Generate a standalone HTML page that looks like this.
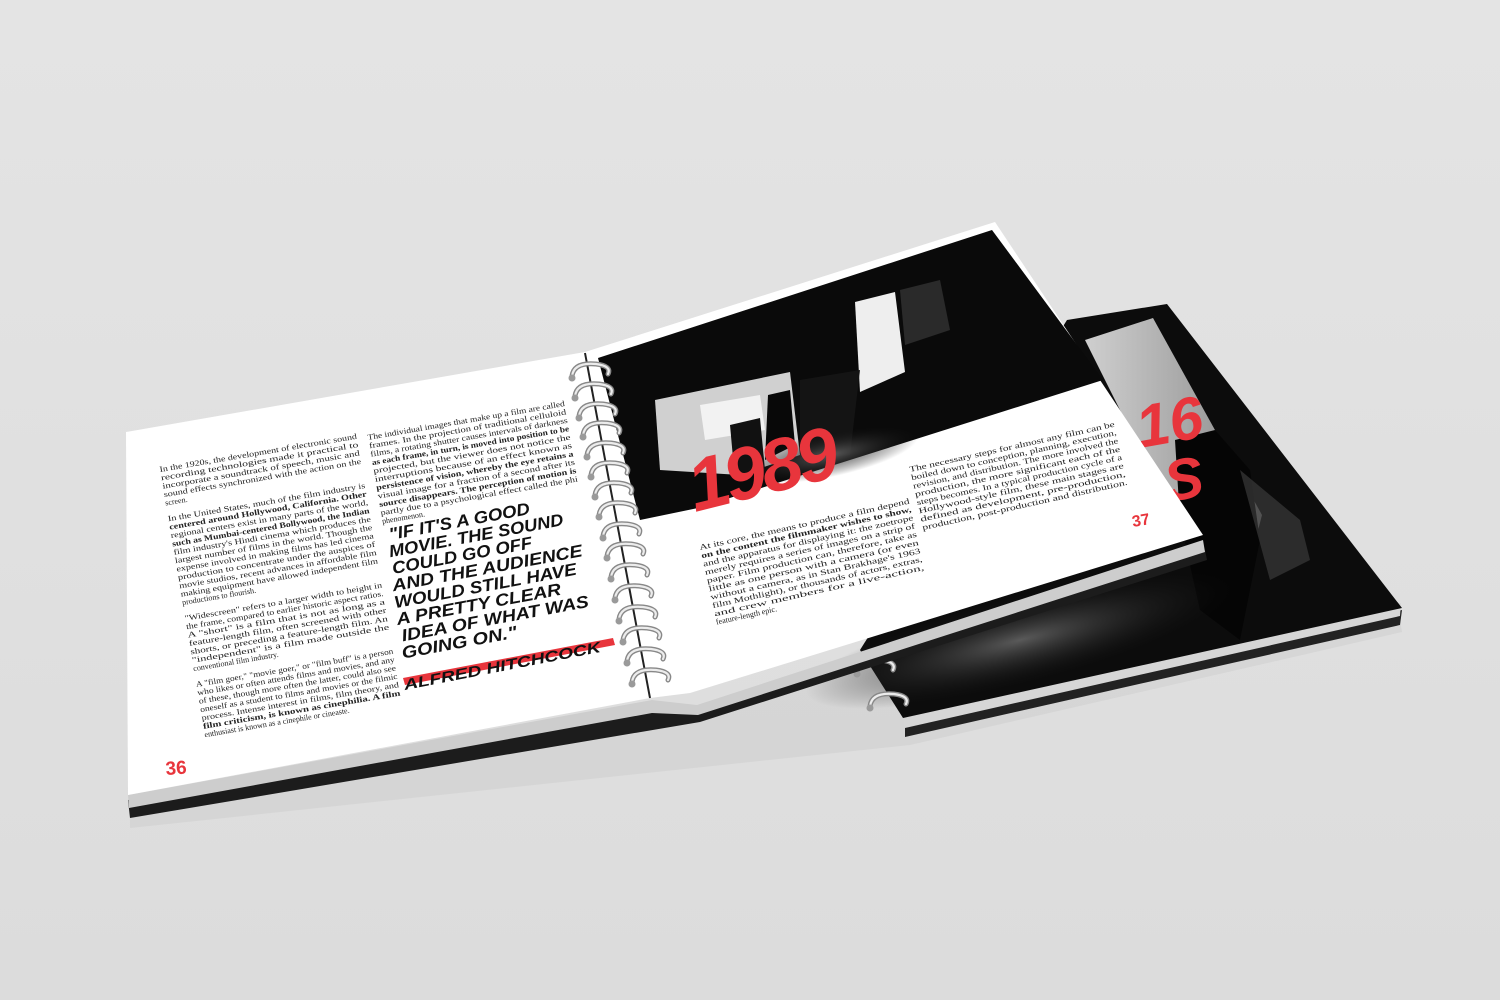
<!DOCTYPE html>
<html><head><meta charset="utf-8"><style>
html,body{margin:0;padding:0;background:#e1e1e1;}
svg{display:block}
.s{font-family:"Liberation Serif",serif;font-size:8px;fill:#222}
.q{font-family:"Liberation Sans Narrow","Liberation Sans",sans-serif;font-style:italic;font-weight:bold;font-size:17px;fill:#111}
</style></head><body>
<svg width="1500" height="1000" viewBox="0 0 1500 1000" xmlns="http://www.w3.org/2000/svg">
<defs>
<linearGradient id="bg" x1="0" y1="0" x2="0" y2="1"><stop offset="0" stop-color="#e4e4e4"/><stop offset="1" stop-color="#dcdcdc"/></linearGradient>
<radialGradient id="gl" cx="0.5" cy="0.5" r="0.5"><stop offset="0" stop-color="#5a5a5a"/><stop offset="1" stop-color="#111" stop-opacity="0"/></radialGradient>
<linearGradient id="ph" x1="0" y1="0" x2="1" y2="0"><stop offset="0" stop-color="#cfcfcf"/><stop offset="1" stop-color="#8a8a8a"/></linearGradient>
<g id="ring">
<path d="M-18,4 q2,-14 24,-12 q16,2 12,10" fill="none" stroke="#888" stroke-width="5" stroke-linecap="round"/>
<path d="M-18,4 q2,-14 24,-12 q16,2 12,10" fill="none" stroke="#ececec" stroke-width="2.2" stroke-linecap="round"/>
<circle cx="-18" cy="6" r="3.5" fill="#9a9a9a"/>
</g>
</defs>
<rect width="1500" height="1000" fill="url(#bg)"/>
<polygon points="130,812 700,722 1210,560 1400,620 1402,632 910,745 130,828" fill="#d2d2d2" opacity="0.7"/>

<!-- back book -->
<polygon points="905,737 1400,625 1402,610 905,724" fill="#222"/>
<polygon points="905,728 1400,616 1401,603 903,716" fill="#d6d6d6"/>
<polygon points="1067,320 1167,304 1402,608 903,718 860,650" fill="#0c0c0c"/>
<polygon points="1085,340 1153,318 1262,515 1240,600 1200,570" fill="url(#ph)"/>
<polygon points="1175,440 1215,430 1250,470 1260,540 1240,640 1200,610 1180,520" fill="#050505"/>
<polygon points="1240,470 1300,520 1310,560 1270,580" fill="#3a3a3a" opacity="0.7"/>
<ellipse cx="1020" cy="640" rx="220" ry="45" fill="url(#gl)" transform="rotate(-14 1020 640)"/>
<text x="1140" y="448" transform="rotate(-10 1140 448)" font-family="Liberation Sans,sans-serif" font-style="italic" font-weight="bold" font-size="60" fill="#e8353c">16</text>
<text x="1168" y="502" transform="rotate(-10 1168 502)" font-family="Liberation Sans,sans-serif" font-style="italic" font-weight="bold" font-size="58" fill="#e8353c">S</text>
<use href="#ring" transform="translate(875,668)"/>
<use href="#ring" transform="translate(888,702)"/>

<!-- front book covers/edges -->
<polygon points="128,800 652,705 700,712 1205,550 1207,560 700,722 130,818" fill="#1c1c1c"/>
<polygon points="128,795 652,700 697,705 1203,540 1205,552 698,715 652,713 129,808" fill="#cdcdcd"/>

<!-- left page -->
<polygon points="126,432 585,352 650,698 128,795" fill="#fff"/>
<!-- right page -->
<polygon points="585,352 995,222 1203,535 690,693 650,698" fill="#fff"/>
<line x1="585" y1="353" x2="650" y2="698" stroke="#222" stroke-width="2"/>
<!-- photo -->
<polygon points="598,358 992,230 1103,380 698,508 640,520" fill="#0a0a0a"/>
<polygon points="655,400 790,372 800,455 740,475 660,470" fill="#d0d0d0"/>
<polygon points="700,405 760,395 765,430 705,440" fill="#f2f2f2"/>
<polygon points="855,302 895,292 905,372 860,392" fill="#eeeeee"/>
<polygon points="800,380 860,370 850,455 800,460" fill="#141414"/>
<polygon points="768,395 790,390 795,445 765,460" fill="#080808"/>
<polygon points="730,425 760,418 765,470 735,480" fill="#111"/>
<polygon points="900,290 940,280 950,330 905,345" fill="#2a2a2a"/>
<ellipse cx="830" cy="455" rx="90" ry="22" fill="url(#gl)" transform="rotate(-12 830 455)"/>
<text x="695" y="512" transform="rotate(-14 695 512)" font-family="Liberation Sans,sans-serif" font-style="italic" font-weight="bold" font-size="74" fill="#e8353c" letter-spacing="-4">1989</text>

<!-- left text col1 -->
<g transform="translate(160,472) rotate(-9.6)" class="s">
<text x="0" y="0" textLength="200" lengthAdjust="spacingAndGlyphs">In the 1920s, the development of electronic sound</text>
<text x="0" y="8.5" textLength="200" lengthAdjust="spacingAndGlyphs">recording technologies made it practical to</text>
<text x="0" y="17" textLength="200" lengthAdjust="spacingAndGlyphs">incorporate a soundtrack of speech, music and</text>
<text x="0" y="25.5" textLength="200" lengthAdjust="spacingAndGlyphs">sound effects synchronized with the action on the</text>
<text x="0" y="34">screen.</text>
<text x="0" y="50" textLength="200" lengthAdjust="spacingAndGlyphs">In the United States, much of the film industry is</text>
<text x="0" y="58.5" textLength="200" lengthAdjust="spacingAndGlyphs" font-weight="bold">centered around Hollywood, California. Other</text>
<text x="0" y="67" textLength="200" lengthAdjust="spacingAndGlyphs">regional centers exist in many parts of the world,</text>
<text x="0" y="75.5" textLength="200" lengthAdjust="spacingAndGlyphs" font-weight="bold">such as Mumbai-centered Bollywood, the Indian</text>
<text x="0" y="84" textLength="200" lengthAdjust="spacingAndGlyphs">film industry's Hindi cinema which produces the</text>
<text x="0" y="92.5" textLength="200" lengthAdjust="spacingAndGlyphs">largest number of films in the world. Though the</text>
<text x="0" y="101" textLength="200" lengthAdjust="spacingAndGlyphs">expense involved in making films has led cinema</text>
<text x="0" y="109.5" textLength="200" lengthAdjust="spacingAndGlyphs">production to concentrate under the auspices of</text>
<text x="0" y="118" textLength="200" lengthAdjust="spacingAndGlyphs">movie studios, recent advances in affordable film</text>
<text x="0" y="126.5" textLength="200" lengthAdjust="spacingAndGlyphs">making equipment have allowed independent film</text>
<text x="0" y="135">productions to flourish.</text>
<text x="0" y="151" textLength="200" lengthAdjust="spacingAndGlyphs">"Widescreen" refers to a larger width to height in</text>
<text x="0" y="159.5" textLength="200" lengthAdjust="spacingAndGlyphs">the frame, compared to earlier historic aspect ratios.</text>
<text x="0" y="168" textLength="200" lengthAdjust="spacingAndGlyphs">A "short" is a film that is not as long as a</text>
<text x="0" y="176.5" textLength="200" lengthAdjust="spacingAndGlyphs">feature-length film, often screened with other</text>
<text x="0" y="185" textLength="200" lengthAdjust="spacingAndGlyphs">shorts, or preceding a feature-length film. An</text>
<text x="0" y="193.5" textLength="200" lengthAdjust="spacingAndGlyphs">"independent" is a film made outside the</text>
<text x="0" y="202">conventional film industry.</text>
<text x="0" y="218" textLength="200" lengthAdjust="spacingAndGlyphs">A "film goer," "movie goer," or "film buff" is a person</text>
<text x="0" y="226.5" textLength="200" lengthAdjust="spacingAndGlyphs">who likes or often attends films and movies, and any</text>
<text x="0" y="235" textLength="200" lengthAdjust="spacingAndGlyphs">of these, though more often the latter, could also see</text>
<text x="0" y="243.5" textLength="200" lengthAdjust="spacingAndGlyphs">oneself as a student to films and movies or the filmic</text>
<text x="0" y="252" textLength="200" lengthAdjust="spacingAndGlyphs">process. Intense interest in films, film theory, and</text>
<text x="0" y="260.5" textLength="200" lengthAdjust="spacingAndGlyphs" font-weight="bold">film criticism, is known as cinephilia. A film</text>
<text x="0" y="269">enthusiast is known as a cinephile or cineaste.</text>
</g>
<g transform="translate(368,440) rotate(-9.8)" class="s">
<text x="0" y="0" textLength="200" lengthAdjust="spacingAndGlyphs">The individual images that make up a film are called</text>
<text x="0" y="8.5" textLength="200" lengthAdjust="spacingAndGlyphs">frames. In the projection of traditional celluloid</text>
<text x="0" y="17" textLength="200" lengthAdjust="spacingAndGlyphs">films, a rotating shutter causes intervals of darkness</text>
<text x="0" y="25.5" textLength="200" lengthAdjust="spacingAndGlyphs" font-weight="bold">as each frame, in turn, is moved into position to be</text>
<text x="0" y="34" textLength="200" lengthAdjust="spacingAndGlyphs">projected, but the viewer does not notice the</text>
<text x="0" y="42.5" textLength="200" lengthAdjust="spacingAndGlyphs">interruptions because of an effect known as</text>
<text x="0" y="51" textLength="200" lengthAdjust="spacingAndGlyphs" font-weight="bold">persistence of vision, whereby the eye retains a</text>
<text x="0" y="59.5" textLength="200" lengthAdjust="spacingAndGlyphs">visual image for a fraction of a second after its</text>
<text x="0" y="68" textLength="200" lengthAdjust="spacingAndGlyphs" font-weight="bold">source disappears. The perception of motion is</text>
<text x="0" y="76.5" textLength="200" lengthAdjust="spacingAndGlyphs">partly due to a psychological effect called the phi</text>
<text x="0" y="85">phenomenon.</text>
</g>
<!-- quote -->
<g transform="translate(390,540) rotate(-10.5)" class="q">
<text x="0" y="0" textLength="143" lengthAdjust="spacingAndGlyphs">"IF IT'S A GOOD</text>
<text x="-3" y="17" textLength="177" lengthAdjust="spacingAndGlyphs">MOVIE. THE SOUND</text>
<text x="-3" y="34" textLength="142" lengthAdjust="spacingAndGlyphs">COULD GO OFF</text>
<text x="-6" y="51" textLength="193" lengthAdjust="spacingAndGlyphs">AND THE AUDIENCE</text>
<text x="-7" y="68" textLength="185" lengthAdjust="spacingAndGlyphs">WOULD STILL HAVE</text>
<text x="-8" y="85" textLength="167" lengthAdjust="spacingAndGlyphs">A PRETTY CLEAR</text>
<text x="-6" y="102" textLength="190" lengthAdjust="spacingAndGlyphs">IDEA OF WHAT WAS</text>
<text x="-9" y="119" textLength="117" lengthAdjust="spacingAndGlyphs">GOING ON."</text>
</g>
<polygon points="403,678 613,638 615,645 405,685" fill="#e8353c"/>
<text x="405" y="690" transform="rotate(-11 405 690)" font-family="Liberation Sans Narrow,Liberation Sans,sans-serif" font-style="italic" font-weight="bold" font-size="15" fill="#111" textLength="200" lengthAdjust="spacingAndGlyphs">ALFRED HITCHCOCK</text>
<text x="166" y="775" font-family="Liberation Sans,sans-serif" font-weight="bold" font-size="19" fill="#e8353c" transform="rotate(-4 166 775)">36</text>

<!-- right page text -->
<g transform="translate(700,550) rotate(-12.5)" class="s">
<text x="0" y="0" textLength="215" lengthAdjust="spacingAndGlyphs">At its core, the means to produce a film depend</text>
<text x="0" y="8.5" textLength="215" lengthAdjust="spacingAndGlyphs" font-weight="bold">on the content the filmmaker wishes to show,</text>
<text x="0" y="17" textLength="215" lengthAdjust="spacingAndGlyphs">and the apparatus for displaying it: the zoetrope</text>
<text x="0" y="25.5" textLength="215" lengthAdjust="spacingAndGlyphs">merely requires a series of images on a strip of</text>
<text x="0" y="34" textLength="215" lengthAdjust="spacingAndGlyphs">paper. Film production can, therefore, take as</text>
<text x="0" y="42.5" textLength="215" lengthAdjust="spacingAndGlyphs">little as one person with a camera (or even</text>
<text x="0" y="51" textLength="215" lengthAdjust="spacingAndGlyphs">without a camera, as in Stan Brakhage's 1963</text>
<text x="0" y="59.5" textLength="215" lengthAdjust="spacingAndGlyphs">film Mothlight), or thousands of actors, extras,</text>
<text x="0" y="68" textLength="215" lengthAdjust="spacingAndGlyphs">and crew members for a live-action,</text>
<text x="0" y="76.5">feature-length epic.</text>
</g>
<g transform="translate(910,472) rotate(-12.5)" class="s">
<text x="0" y="0" textLength="210" lengthAdjust="spacingAndGlyphs">The necessary steps for almost any film can be</text>
<text x="0" y="8.5" textLength="210" lengthAdjust="spacingAndGlyphs">boiled down to conception, planning, execution,</text>
<text x="0" y="17" textLength="210" lengthAdjust="spacingAndGlyphs">revision, and distribution. The more involved the</text>
<text x="0" y="25.5" textLength="210" lengthAdjust="spacingAndGlyphs">production, the more significant each of the</text>
<text x="0" y="34" textLength="210" lengthAdjust="spacingAndGlyphs">steps becomes. In a typical production cycle of a</text>
<text x="0" y="42.5" textLength="210" lengthAdjust="spacingAndGlyphs">Hollywood-style film, these main stages are</text>
<text x="0" y="51" textLength="210" lengthAdjust="spacingAndGlyphs">defined as development, pre-production,</text>
<text x="0" y="59.5" textLength="210" lengthAdjust="spacingAndGlyphs">production, post-production and distribution.</text>
</g>
<text x="1133" y="527" transform="rotate(-10 1133 527)" font-family="Liberation Sans,sans-serif" font-weight="bold" font-size="16" fill="#e8353c">37</text>

<!-- spiral -->
<use href="#ring" transform="translate(590,372)"/>
<use href="#ring" transform="translate(593,392)"/>
<use href="#ring" transform="translate(597,412)"/>
<use href="#ring" transform="translate(601,431)"/>
<use href="#ring" transform="translate(605,451)"/>
<use href="#ring" transform="translate(609,471)"/>
<use href="#ring" transform="translate(613,491)"/>
<use href="#ring" transform="translate(617,511)"/>
<use href="#ring" transform="translate(621,532)"/>
<use href="#ring" transform="translate(625,552)"/>
<use href="#ring" transform="translate(629,573)"/>
<use href="#ring" transform="translate(633,594)"/>
<use href="#ring" transform="translate(637,615)"/>
<use href="#ring" transform="translate(641,636)"/>
<use href="#ring" transform="translate(645,657)"/>
<use href="#ring" transform="translate(650,678)"/>
</svg>
</body></html>
